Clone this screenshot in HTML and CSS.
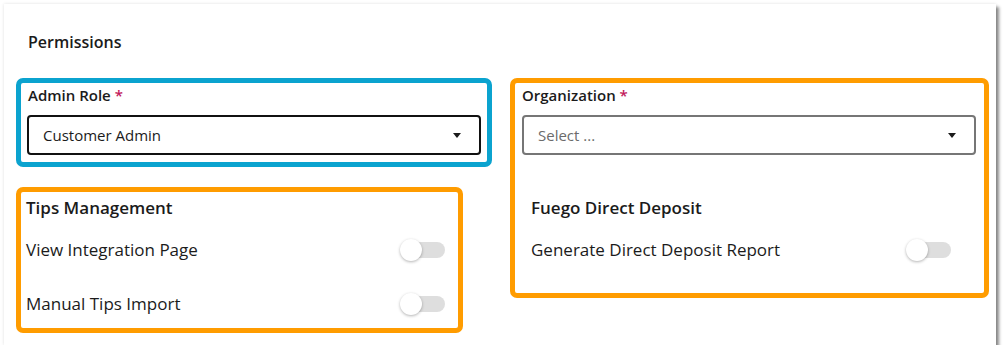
FILE: index.html
```html
<!DOCTYPE html>
<html>
<head>
<meta charset="utf-8">
<link rel="stylesheet" href="styles.css">
</head>
<body>
<div class="card">
  <h2 class="title">Permissions</h2>
  <div class="grid">
    <div class="col">
      <div class="box box-blue">
        <div class="label">Admin Role <span class="req">*</span></div>
        <div class="select select-filled"><span>Customer Admin</span><span class="caret"></span></div>
      </div>
      <div class="box box-orange tips">
        <div class="section-title">Tips Management</div>
        <div class="row"><span>View Integration Page</span><span class="toggle"><span class="thumb"></span></span></div>
        <div class="row row2"><span>Manual Tips Import</span><span class="toggle"><span class="thumb"></span></span></div>
      </div>
    </div>
    <div class="col">
      <div class="box box-orange org">
        <div class="label">Organization <span class="req">*</span></div>
        <div class="select select-empty"><span>Select ...</span><span class="caret"></span></div>
        <div class="fuego">
          <div class="section-title">Fuego Direct Deposit</div>
          <div class="row"><span>Generate Direct Deposit Report</span><span class="toggle"><span class="thumb"></span></span></div>
        </div>
      </div>
    </div>
  </div>
</div>
</body>
</html>
```
FILE: styles.css
```css
* { box-sizing: border-box; }
body {
  margin: 0;
  background: #fff;
  font-family: "Open Sans", "Noto Sans", sans-serif;
  color: #1b1b1b;
}
.card {
  margin: 4px 0 0 4px;
  width: 992px;
  height: 341px;
  background: #fff;
  box-shadow: 3px 3px 3px rgba(0,0,0,0.45), 0 0 3px rgba(0,0,0,0.12);
  padding: 0 0 0 12px;
}
.title {
  margin: 0;
  padding: 27px 0 0 12px;
  font-size: 16px;
  font-weight: 600;
  line-height: 22px;
  height: 74px;
}
.grid {
  display: grid;
  grid-template-columns: 476px 479px;
  column-gap: 18px;
}
.col {
  display: flex;
  flex-direction: column;
  align-items: flex-start;
  gap: 20px;
}
.box {
  border: 5px solid;
  border-radius: 7px;
  width: 100%;
}
.box-blue {
  border-color: #0ba3cf;
  padding: 2px 6px 7px 6px;
}
.box-orange { border-color: #ff9c00; }
.label {
  font-size: 15px;
  font-weight: 600;
  line-height: 20px;
  padding-left: 1px;
  margin-bottom: 10px;
}
.req { color: #c2185b; }
.select {
  height: 40px;
  border-radius: 4px;
  display: flex;
  align-items: center;
  justify-content: space-between;
  padding: 0 18px 0 14px;
  font-size: 15px;
}
.select-filled { border: 2px solid #111; color: #1b1b1b; }
.select-empty { border: 2px solid #767676; color: #6b6b6b; }
.caret {
  width: 0;
  height: 0;
  border-left: 4px solid transparent;
  border-right: 4px solid transparent;
  border-top: 5px solid #1b1b1b;
}
.org {
  height: 220px;
  padding: 2px 8px 0 7px;
}
.org .label { padding-left: 0; }
.fuego {
  padding: 42px 25px 0 9px;
}
.section-title {
  font-size: 17px;
  font-weight: 600;
  line-height: 22px;
}
.row {
  display: flex;
  align-items: center;
  justify-content: space-between;
  font-size: 17px;
  line-height: 24px;
  margin-top: 19px;
}
.tips {
  width: 447px;
  height: 146px;
  padding: 5px 13px 0 5px;
}
.row2 { margin-top: 30px; }
.toggle {
  position: relative;
  width: 45px;
  height: 16px;
  display: block;
}
.toggle::before {
  content: "";
  position: absolute;
  left: 4px;
  right: 0;
  top: 0;
  bottom: 0;
  border-radius: 8px;
  background: #dedede;
}
.thumb {
  position: absolute;
  left: 0;
  top: -3px;
  width: 22px;
  height: 22px;
  border-radius: 50%;
  background: #fff;
  box-shadow: 0 1px 3px rgba(0,0,0,0.3);
}
```
